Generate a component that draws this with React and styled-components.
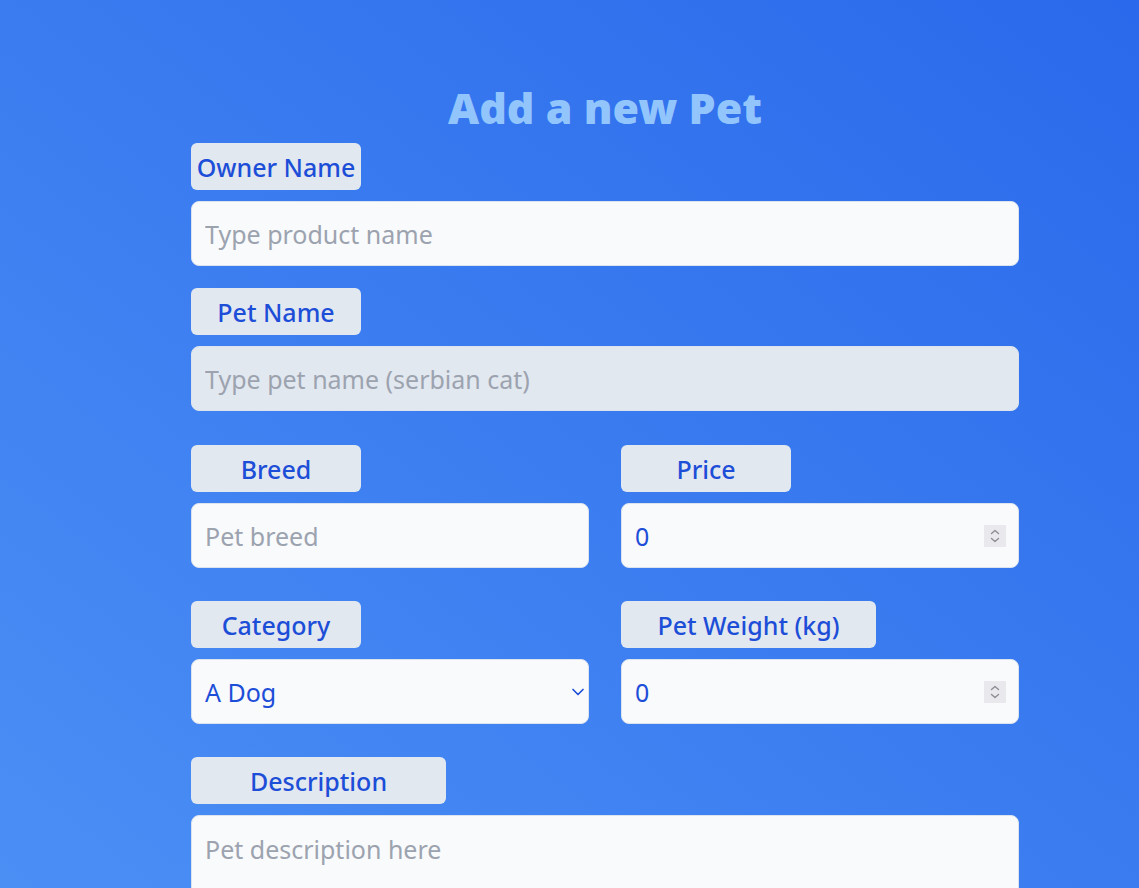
import React from 'react'
import styled, { createGlobalStyle } from 'styled-components'
import { ChevronDown } from 'lucide-react'

const GlobalStyle = createGlobalStyle`
  html, body {
    margin: 0;
    padding: 0;
  }
  body {
    font-family: "Noto Sans", "Open Sans", sans-serif;
    background: linear-gradient(to top right, #4b8ff5, #2a69eb);
    background-attachment: fixed;
    min-height: 100vh;
  }
`

const Page = styled.div`
  padding: 80px 120px 60px 191px;
`

const Title = styled.h1`
  margin: 0 0 7px;
  text-align: center;
  font-size: 43px;
  font-weight: 900;
  line-height: 56px;
  color: #93c5fd;
`

const Form = styled.form`
  width: 828px;
  display: flex;
  flex-direction: column;
`

const Block = styled.div`
  display: flex;
  flex-direction: column;
  gap: ${p => p.$gap || 33}px;
  margin-top: ${p => p.$top || 0}px;
`

const Row = styled.div`
  display: grid;
  grid-template-columns: 398px 398px;
  column-gap: 32px;
`

const Field = styled.div`
  display: flex;
  flex-direction: column;
  align-items: flex-start;
  gap: 11px;
`

const Label = styled.label`
  box-sizing: border-box;
  width: ${p => p.$wide ? 255 : 170}px;
  height: 47px;
  display: flex;
  align-items: center;
  justify-content: center;
  background: #e2e8f0;
  border-radius: 6px;
  color: #1d4ed8;
  font-size: 25px;
  font-weight: 500;
  white-space: nowrap;
`

const inputBase = `
  box-sizing: border-box;
  width: 100%;
  border: 1px solid #dbe3ee;
  border-radius: 8px;
  padding: 0 13px;
  font-family: "Noto Sans", "Open Sans", sans-serif;
  font-size: 25px;
  color: #1d4ed8;
  outline: none;
  &::placeholder {
    color: #9ca3af;
  }
`

const Input = styled.input`
  ${inputBase}
  height: 65px;
  background: ${p => p.$muted ? '#e2e8f0' : '#f8fafc'};

  &::-webkit-inner-spin-button,
  &::-webkit-outer-spin-button {
    -webkit-appearance: none;
    margin: 0;
  }
`

const Wrap = styled.div`
  position: relative;
  width: 100%;
`

const Select = styled.select`
  ${inputBase}
  height: 65px;
  background: #f8fafc;
  appearance: none;
`

const SelectIcon = styled.span`
  position: absolute;
  right: 1px;
  top: 50%;
  transform: translateY(-50%);
  display: flex;
  color: #1d4ed8;
  pointer-events: none;
`

const Spinner = styled.span`
  position: absolute;
  right: 13px;
  top: 50%;
  transform: translateY(-50%);
  width: 22px;
  height: 22px;
  background: #e9e9ed;
  display: flex;
  align-items: center;
  justify-content: center;
  pointer-events: none;
`

const TextArea = styled.textarea`
  ${inputBase}
  height: 200px;
  padding-top: 16px;
  background: #f8fafc;
  resize: none;
`

const SpinIcon = () => (
  <svg width="22" height="22" viewBox="0 0 22 22" fill="none" stroke="#8d8d94" strokeWidth="1.4" strokeLinecap="round" strokeLinejoin="round">
    <path d="M7.5 8.5 L11 5.5 L14.5 8.5" />
    <path d="M7.5 13.5 L11 16.5 L14.5 13.5" />
  </svg>
)

const NumberField = () => (
  <Wrap>
    <Input type="number" defaultValue={0} />
    <Spinner><SpinIcon /></Spinner>
  </Wrap>
)

export default function App() {
  return (
    <>
      <GlobalStyle />
      <Page>
        <Title>Add a new Pet</Title>
        <Form onSubmit={e => e.preventDefault()}>
          <Block $gap={22}>
            <Field>
              <Label>Owner Name</Label>
              <Input placeholder="Type product name" />
            </Field>
            <Field>
              <Label>Pet Name</Label>
              <Input $muted placeholder="Type pet name (serbian cat)" />
            </Field>
          </Block>
          <Block $top={34}>
            <Row>
              <Field>
                <Label>Breed</Label>
                <Input placeholder="Pet breed" />
              </Field>
              <Field>
                <Label>Price</Label>
                <NumberField />
              </Field>
            </Row>
            <Row>
              <Field>
                <Label>Category</Label>
                <Wrap>
                  <Select defaultValue="dog">
                    <option value="dog">A Dog</option>
                    <option value="cat">A Cat</option>
                    <option value="bird">A Bird</option>
                  </Select>
                  <SelectIcon><ChevronDown size={20} strokeWidth={2} /></SelectIcon>
                </Wrap>
              </Field>
              <Field>
                <Label $wide>Pet Weight (kg)</Label>
                <NumberField />
              </Field>
            </Row>
            <Field>
              <Label $wide>Description</Label>
              <TextArea placeholder="Pet description here" />
            </Field>
          </Block>
        </Form>
      </Page>
    </>
  )
}
